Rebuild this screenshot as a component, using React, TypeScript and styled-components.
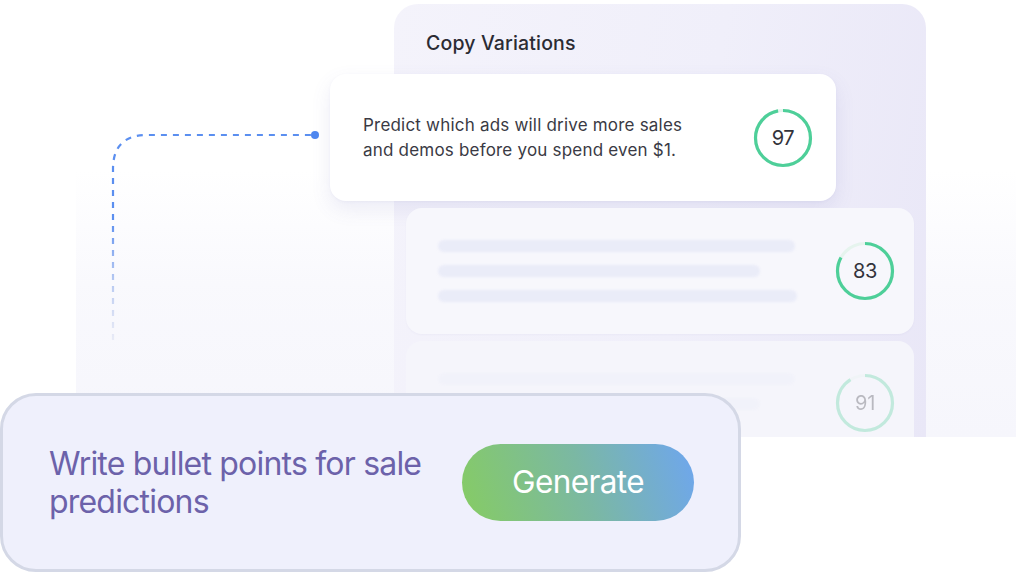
import React from "react";
import styled, { createGlobalStyle } from "styled-components";

const Global = createGlobalStyle`
  html, body { margin: 0; padding: 0; background: #ffffff; }
  body { font-family: "Inter", "Noto Sans", sans-serif; -webkit-font-smoothing: antialiased; }
`;

const Stage = styled.div`
  position: relative;
  width: 1016px;
  height: 572px;
  overflow: hidden;
  background: #ffffff;
  display: flex;
  flex-direction: column;
  &::before {
    content: "";
    position: absolute;
    left: 76px;
    right: 0;
    top: 170px;
    height: 267px;
    background: linear-gradient(to bottom, rgba(246, 246, 252, 0) 0%, rgba(246, 246, 252, 0.7) 45%, #f6f6fc 100%);
  }
`;

const Panel = styled.section`
  position: relative;
  margin: 4px 0 0 394px;
  width: 532px;
  height: 433px;
  flex: none;
  box-sizing: border-box;
  padding-top: 27px;
  border-radius: 24px 24px 0 0;
  background: linear-gradient(100deg, #f4f3fb 0%, #f0effa 55%, #e9e7f7 100%);
  display: flex;
  flex-direction: column;
`;

const Title = styled.h2`
  margin: 0 0 19px 32px;
  font-size: 19.5px;
  line-height: 24px;
  font-weight: 500;
  color: #2b2b33;
  letter-spacing: 0.15px;
`;

const CardList = styled.div`
  display: flex;
  flex-direction: column;
  gap: 7px;
`;

const Card = styled.div<{ $featured?: boolean; $cut?: boolean }>`
  box-sizing: border-box;
  height: ${(p) => (p.$featured ? 127 : p.$cut ? 96 : 126)}px;
  margin: ${(p) => (p.$featured ? "0 90px 0 -64px" : "0 12px")};
  padding: ${(p) =>
    p.$featured ? "0 23px 0 33px" : p.$cut ? "32px 19px 0 32px" : "0 19px 0 32px"};
  border-radius: ${(p) => (p.$cut ? "16px 16px 0 0" : "16px")};
  background: ${(p) => (p.$featured ? "#ffffff" : p.$cut ? "#f5f5fb" : "#f7f7fc")};
  box-shadow: ${(p) =>
    p.$featured
      ? "0 8px 20px rgba(95, 90, 170, 0.11), 0 1px 3px rgba(95, 90, 170, 0.05)"
      : p.$cut
      ? "none"
      : "0 1px 2px rgba(120, 120, 180, 0.05)"};
  display: flex;
  align-items: ${(p) => (p.$cut ? "flex-start" : "center")};
  justify-content: space-between;
  flex: none;
`;

const CopyText = styled.p`
  margin: 0;
  font-size: 17px;
  line-height: 25px;
  color: #3a3a44;
  letter-spacing: 0.2px;
  white-space: nowrap;
`;

const Bars = styled.div<{ $fade?: boolean }>`
  display: flex;
  flex-direction: column;
  gap: 13px;
  ${(p) => (p.$fade ? "opacity: 0.3;" : "")}
`;

const Bar = styled.div<{ $w: number }>`
  width: ${(p) => p.$w}px;
  height: 12px;
  border-radius: 6px;
  background: #eaecf8;
  filter: blur(0.8px);
`;

const RingBox = styled.div<{ $fade?: boolean }>`
  position: relative;
  width: 60px;
  height: 60px;
  flex: none;
  display: grid;
  place-items: center;
  ${(p) => (p.$fade ? "opacity: 0.3;" : "")}
`;

const RingSvg = styled.svg`
  grid-area: 1 / 1;
  width: 60px;
  height: 60px;
  transform: rotate(-90deg);
`;

const RingValue = styled.span`
  grid-area: 1 / 1;
  font-size: 20px;
  line-height: 1;
  color: #33333b;
  letter-spacing: -0.3px;
`;

const Ring: React.FC<{ value: number; fade?: boolean }> = ({ value, fade }) => {
  const r = 27.5;
  const c = 2 * Math.PI * r;
  return (
    <RingBox $fade={fade}>
      <RingSvg viewBox="0 0 60 60">
        <circle cx="30" cy="30" r={r} fill="none" stroke="#e6f4ee" strokeWidth="3.2" />
        <circle
          cx="30"
          cy="30"
          r={r}
          fill="none"
          stroke="#4ecf99"
          strokeWidth="3.2"
          strokeDasharray={`${(c * value) / 100} ${c}`}
        />
      </RingSvg>
      <RingValue>{value}</RingValue>
    </RingBox>
  );
};

const Connector = styled.svg`
  position: absolute;
  left: 0;
  top: 0;
  width: 340px;
  height: 360px;
  pointer-events: none;
`;

const PromptBox = styled.div`
  position: relative;
  box-sizing: border-box;
  width: 741px;
  height: 179px;
  margin-top: -44px;
  flex: none;
  border: 3px solid #d4d8e6;
  border-radius: 36px;
  background: #eff0fc;
  padding: 0 44px 0 46px;
  display: flex;
  align-items: center;
  justify-content: space-between;
`;

const PromptText = styled.p`
  margin: 0;
  width: 400px;
  font-size: 32px;
  line-height: 38px;
  color: #6c62aa;
  letter-spacing: -0.8px;
`;

const GenerateButton = styled.button`
  width: 232px;
  height: 77px;
  border: none;
  border-radius: 39px;
  background: linear-gradient(72deg, #86cc63 0%, #7bb8a3 52%, #6ea6ef 100%);
  color: #ffffff;
  font-family: "Inter", sans-serif;
  font-size: 31.5px;
  letter-spacing: -0.6px;
  padding: 0 0 2px;
  cursor: pointer;
`;

export default function App() {
  return (
    <>
      <Global />
      <Stage>
        <Panel>
          <Title>Copy Variations</Title>
          <CardList>
            <Card $featured>
              <CopyText>
                Predict which ads will drive more sales
                <br />
                and demos before you spend even $1.
              </CopyText>
              <Ring value={97} />
            </Card>
            <Card>
              <Bars>
                <Bar $w={357} />
                <Bar $w={322} />
                <Bar $w={359} />
              </Bars>
              <Ring value={83} />
            </Card>
            <Card $cut>
              <Bars $fade>
                <Bar $w={357} />
                <Bar $w={322} />
              </Bars>
              <Ring value={91} fade />
            </Card>
          </CardList>
        </Panel>
        <Connector viewBox="0 0 340 360">
          <defs>
            <linearGradient id="lineFade" gradientUnits="userSpaceOnUse" x1="0" y1="340" x2="0" y2="220">
              <stop offset="0" stopColor="#b9c3e6" stopOpacity="0.25" />
              <stop offset="1" stopColor="#5b8ff0" stopOpacity="1" />
            </linearGradient>
          </defs>
          <path
            d="M113 340 V169 Q113 135 147 135 H312"
            fill="none"
            stroke="url(#lineFade)"
            strokeWidth="2.2"
            strokeDasharray="6 6"
            strokeLinecap="butt"
          />
          <circle cx="315" cy="135" r="4" fill="#4d86ef" />
        </Connector>
        <PromptBox>
          <PromptText>Write bullet points for sale predictions</PromptText>
          <GenerateButton>Generate</GenerateButton>
        </PromptBox>
      </Stage>
    </>
  );
}
